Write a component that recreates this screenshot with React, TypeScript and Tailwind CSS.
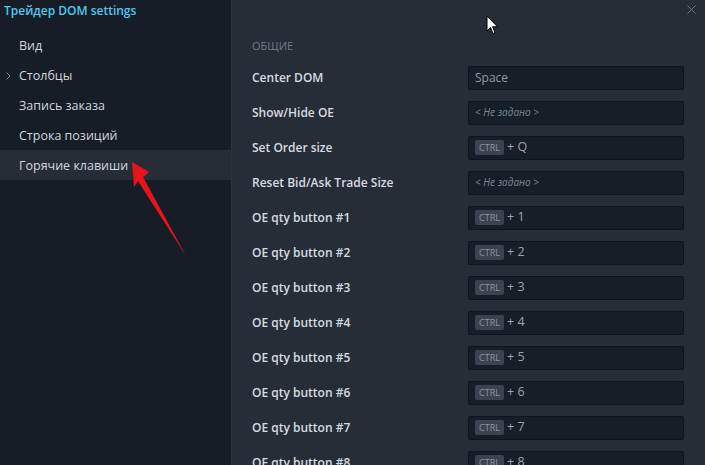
import React from 'react';

type Row = { label: string; key?: string; ctrl?: boolean };

const rows: Row[] = [
  { label: 'Center DOM', key: 'Space' },
  { label: 'Show/Hide OE' },
  { label: 'Set Order size', key: 'Q', ctrl: true },
  { label: 'Reset Bid/Ask Trade Size' },
  { label: 'OE qty button #1', key: '1', ctrl: true },
  { label: 'OE qty button #2', key: '2', ctrl: true },
  { label: 'OE qty button #3', key: '3', ctrl: true },
  { label: 'OE qty button #4', key: '4', ctrl: true },
  { label: 'OE qty button #5', key: '5', ctrl: true },
  { label: 'OE qty button #6', key: '6', ctrl: true },
  { label: 'OE qty button #7', key: '7', ctrl: true },
  { label: 'OE qty button #8', key: '8', ctrl: true },
];

const menu = ['Вид', 'Столбцы', 'Запись заказа', 'Строка позиций', 'Горячие клавиши'];

function HotkeyInput({ row }: { row: Row }) {
  return (
    <div className="w-[216px] h-[24px] bg-[#161e28] border border-[#0f151c] rounded-[2px] flex items-center px-[6px]">
      {!row.key && (
        <span className="text-[10px] italic text-[#7b8794]">&lt; Не задано &gt;</span>
      )}
      {row.key && !row.ctrl && <span className="text-[12px] text-[#8f9aa6]">{row.key}</span>}
      {row.key && row.ctrl && (
        <div className="flex items-center gap-[3px]">
          <span className="h-[15px] w-[29px] rounded-[2px] bg-[#3a434e] text-[9px] leading-[15px] text-center text-[#8c97a3]">
            CTRL
          </span>
          <span className="text-[12.5px] text-[#9aa5b1]">+ {row.key}</span>
        </div>
      )}
    </div>
  );
}

export default function App() {
  return (
    <div
      className="relative w-[705px] h-[465px] overflow-hidden flex bg-[#262d37]"
      style={{ fontFamily: '"Open Sans", "Noto Sans", sans-serif' }}
    >
      {/* Sidebar */}
      <div className="w-[232px] shrink-0 bg-[#161d26] border-r border-[#2c333d]">
        <div className="h-[21px] pl-[4px] flex items-center text-[12px] font-semibold text-[#52c8ef]">
          Трейдер DOM settings
        </div>
        <div className="mt-[9px]">
          {menu.map((item, i) => (
            <div
              key={item}
              className={`relative h-[30px] pl-[19px] pt-[2px] flex items-center text-[12.5px] text-[#d3d7dc] ${
                i === 4 ? 'bg-[#262d37]' : ''
              }`}
            >
              {i === 1 && (
                <svg className="absolute left-[6px] top-[12px] w-[5px] h-[8px]" viewBox="0 0 5 8" fill="none">
                  <path d="M0.5 0.5L4 4L0.5 7.5" stroke="#7c8590" strokeWidth="1" />
                </svg>
              )}
              {item}
            </div>
          ))}
        </div>
      </div>

      {/* Main */}
      <div className="flex-1 pt-[38px] pl-[20px]">
        <div className="h-[16px] leading-[16px] text-[11px] text-[#6f7a86] mb-[6px]">ОБЩИЕ</div>
        {rows.map((row) => (
          <div key={row.label} className="h-[35px] flex items-center">
            <div className="w-[216px] text-[12px] font-semibold text-[#d7dbe0]">{row.label}</div>
            <HotkeyInput row={row} />
          </div>
        ))}
      </div>

      {/* Close */}
      <svg className="absolute left-[687px] top-[5px] w-[9px] h-[9px]" viewBox="0 0 9 9">
        <path d="M0.5 0.5L8.5 8.5M8.5 0.5L0.5 8.5" stroke="#6d7782" strokeWidth="1" />
      </svg>

      {/* Mouse cursor */}
      <svg className="absolute left-[486px] top-[15px] w-[13px] h-[20px]" viewBox="0 0 13 20">
        <path d="M1 1L1 16L4.5 12.5L7 18.5L9 17.5L6.6 11.8L11.5 11.8Z" fill="#fff" stroke="#000" strokeWidth="1" />
      </svg>

      {/* Red annotation arrow */}
      <svg className="absolute left-0 top-0 w-[705px] h-[465px] pointer-events-none" viewBox="0 0 705 465">
        <polygon points="132,162 149,172 143,177 186,256 138,181 134,187" fill="#e8141a" />
      </svg>
    </div>
  );
}
